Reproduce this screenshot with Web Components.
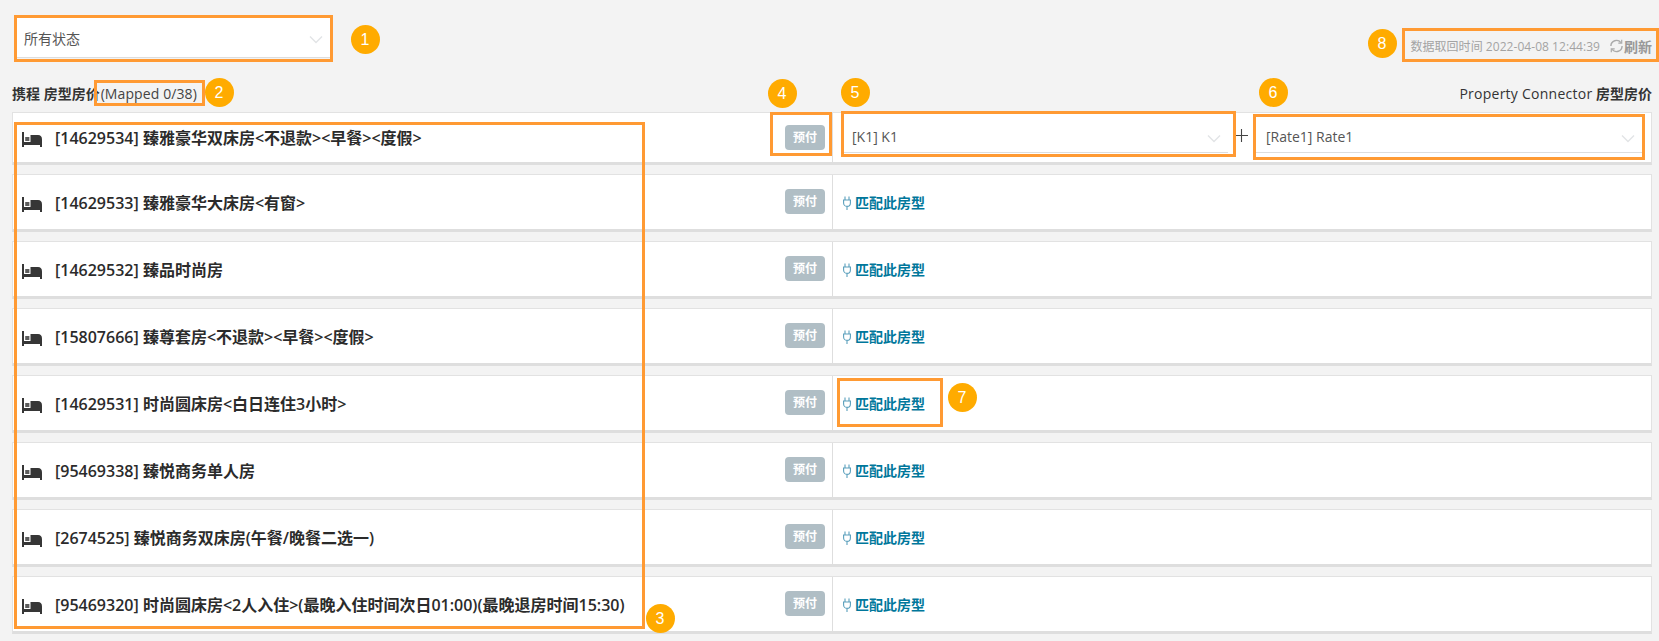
<!DOCTYPE html>
<html lang="zh">
<head>
<meta charset="utf-8">
<title>房型房价</title>
<style>
  html, body { margin: 0; padding: 0; background: #f3f3f3; }
  body {
    position: relative;
    height: 641px;
    overflow: hidden;
    font-family: "Open Sans", "Noto Sans CJK SC", sans-serif;
    color: #333;
  }
</style>
</head>
<body>
<map-page>
  <select-box slot="status" style="width:316px;height:40px;color:#555" pad="10">所有状态</select-box>
  <refresh-info slot="refresh" time="数据取回时间 2022-04-08 12:44:39">刷新</refresh-info>
  <span slot="left">携程 房型房价<span style="font-weight:400;margin-left:1px;letter-spacing:.1px;color:#444">(Mapped 0/38)</span></span>
  <span slot="right"><span style="font-weight:500;letter-spacing:.25px">Property Connector</span> 房型房价</span>

  <room-row first>[14629534] 臻雅豪华双床房&lt;不退款&gt;&lt;早餐&gt;&lt;度假&gt;
    <mapping-pair slot="map"><span slot="a">[K1] K1</span><span slot="b">[Rate1] Rate1</span></mapping-pair>
  </room-row>
  <room-row>[14629533] 臻雅豪华大床房&lt;有窗&gt;<match-link slot="map">匹配此房型</match-link></room-row>
  <room-row>[14629532] 臻品时尚房<match-link slot="map">匹配此房型</match-link></room-row>
  <room-row>[15807666] 臻尊套房&lt;不退款&gt;&lt;早餐&gt;&lt;度假&gt;<match-link slot="map">匹配此房型</match-link></room-row>
  <room-row>[14629531] 时尚圆床房&lt;白日连住3小时&gt;<match-link slot="map">匹配此房型</match-link></room-row>
  <room-row>[95469338] 臻悦商务单人房<match-link slot="map">匹配此房型</match-link></room-row>
  <room-row>[2674525] 臻悦商务双床房(午餐/晚餐二选一)<match-link slot="map">匹配此房型</match-link></room-row>
  <room-row>[95469320] 时尚圆床房&lt;2人入住&gt;(最晚入住时间次日01:00)(最晚退房时间15:30)<match-link slot="map">匹配此房型</match-link></room-row>
</map-page>

<!-- annotations drawn over the screenshot -->
<mark-box x="14" y="15" w="319" h="47"></mark-box>
<mark-box x="94" y="80" w="111" h="26"></mark-box>
<mark-box x="14" y="122" w="631" h="507"></mark-box>
<mark-box x="770" y="112" w="62" h="44"></mark-box>
<mark-box x="841" y="111" w="395" h="46"></mark-box>
<mark-box x="1253" y="114" w="392" h="46"></mark-box>
<mark-box x="837" y="378" w="106" h="49"></mark-box>
<mark-box x="1402" y="28" w="257" h="34"></mark-box>

<num-badge x="365" y="39">1</num-badge>
<num-badge x="219" y="92">2</num-badge>
<num-badge x="660" y="618">3</num-badge>
<num-badge x="782" y="93">4</num-badge>
<num-badge x="855" y="92">5</num-badge>
<num-badge x="1273" y="92">6</num-badge>
<num-badge x="962" y="397">7</num-badge>
<num-badge x="1382" y="43">8</num-badge>

<script>
class MapPage extends HTMLElement {
  connectedCallback() {
    this.attachShadow({mode: 'open'}).innerHTML = `
      <style>
        :host { display: block; padding: 18px 7px 0 12px; box-sizing: border-box; }
        .top { display: flex; justify-content: space-between; height: 40px; padding-left: 2px; }
        .heading {
          display: flex; justify-content: space-between; align-items: center;
          height: 26px; margin: 22px 0 6px; font-size: 14px; font-weight: 600; color: #333;
        }
        .rows { display: flex; flex-direction: column; gap: 9px; }
      </style>
      <div class="top"><slot name="status"></slot><slot name="refresh"></slot></div>
      <div class="heading"><slot name="left"></slot><slot name="right"></slot></div>
      <div class="rows"><slot></slot></div>
    `;
  }
}

class SelectBox extends HTMLElement {
  connectedCallback() {
    let pad = this.getAttribute('pad') || 8;
    this.attachShadow({mode: 'open'}).innerHTML = `
      <style>
        :host {
          display: flex; align-items: center; justify-content: space-between; box-sizing: border-box;
          background: #fff; border-bottom: 1px solid #ddd; font-size: 14px; color: #444;
          padding: 0 7px 0 ${pad}px;
        }
        svg { display: block; margin-top: 4px; }
      </style>
      <span><slot></slot></span>
      <svg width="14" height="9" viewBox="0 0 14 9"><path d="M1 1.5 7 7.5 13 1.5" fill="none" stroke="#e2e4e6" stroke-width="1.4"/></svg>
    `;
  }
}

class RefreshInfo extends HTMLElement {
  connectedCallback() {
    this.attachShadow({mode: 'open'}).innerHTML = `
      <style>
        :host { display: flex; align-items: center; margin-top: 16px; height: 24px; color: #a3a3a3; font-size: 12px; }
        .time { letter-spacing: .05px; }
        .btn { display: flex; align-items: center; margin-left: 9px; font-size: 14px; font-weight: 700; color: #999; }
        svg { display: block; }
      </style>
      <span class="time">${this.getAttribute('time')}</span>
      <span class="btn">
        <svg width="15" height="14" viewBox="0 0 14 14" fill="none" stroke="#aaa" stroke-width="1.4">
          <path d="M1.4 7A5.6 5.6 0 0 1 11.4 3.6"/><path d="M12.6 7A5.6 5.6 0 0 1 2.6 10.4"/>
          <path d="M12.2 .8V4.2H8.8" stroke-width="1.2"/><path d="M1.8 13.2V9.8H5.2" stroke-width="1.2"/>
        </svg><slot></slot>
      </span>
    `;
  }
}

class RoomRow extends HTMLElement {
  connectedCallback() {
    this.attachShadow({mode: 'open'}).innerHTML = `
      <style>
        :host {
          display: grid; grid-template-columns: 819px 1fr; box-sizing: border-box;
          height: 58px; background: #fff;
          border: 1px solid #e2e2e2; border-bottom: 3px solid #dedede;
        }
        :host([first]) { height: 53px; }
        .left { display: flex; align-items: center; padding: 0 7px 0 9px; }
        .bed { display: block; flex: none; margin: 4px 13px 0 0; }
        .name { flex: 1; padding-bottom: 1px; font-size: 16px; font-weight: 600; color: #2b2b2b; white-space: nowrap; }
        .rate {
          flex: none; width: 40px; height: 25px; line-height: 25px; border-radius: 4px; margin-bottom: 1px;
          background: #b0bec5; color: #fff; text-align: center; font-size: 12px; font-weight: 700;
        }
        .map { display: flex; align-items: center; border-left: 1px solid #dedede; min-width: 0; }
      </style>
      <div class="left">
        <svg class="bed" width="20" height="15" viewBox="0 0 20 15" fill="#363636">
          <path d="M0 0h2v10h18v5h-2v-2H2v2H0z"/>
          <path d="M8.5 3H16q4 0 4 4.5V10H8.5z"/>
          <rect x="3.2" y="5" width="4.2" height="4" fill="#5c5c5c"/>
        </svg>
        <span class="name"><slot></slot></span>
        <span class="rate">预付</span>
      </div>
      <div class="map"><slot name="map"></slot></div>
    `;
  }
}

class MappingPair extends HTMLElement {
  connectedCallback() {
    this.attachShadow({mode: 'open'}).innerHTML = `
      <style>
        :host { display: flex; align-items: flex-start; flex: 1; height: 100%; padding: 7px 9px 0 11px; box-sizing: border-box; }
        select-box { flex: 1; height: 33px; padding-top: 1px; font-size: 14px; color: #555; }
        .plus { flex: none; width: 27px; height: 30px; display: flex; align-items: center; justify-content: center; }
        .plus svg { display: block; }
      </style>
      <select-box pad="8"><slot name="a"></slot></select-box>
      <span class="plus"><svg width="13" height="13" viewBox="0 0 13 13"><path d="M6.5 0v13M0 6.5h13" stroke="#444" stroke-width="1.1"/></svg></span>
      <select-box pad="11"><slot name="b"></slot></select-box>
    `;
  }
}

class MatchLink extends HTMLElement {
  connectedCallback() {
    this.attachShadow({mode: 'open'}).innerHTML = `
      <style>
        :host {
          display: inline-flex; align-items: center; margin-left: 9px;
          font-size: 14px; font-weight: 700; color: #00779b;
        }
        svg { display: block; margin: 1px 3px 0 0; }
      </style>
      <svg width="10" height="14" viewBox="0 0 10 14" fill="none" stroke="#5a9fbc" stroke-width="1.1">
        <path d="M3 .5v3.5M7 .5v3.5M1 4h8M1.6 4v3a3.4 3.4 0 0 0 6.8 0V4M5 10.4V14"/>
      </svg><slot></slot>
    `;
  }
}

class MarkBox extends HTMLElement {
  connectedCallback() {
    let root = this.attachShadow({mode: 'open'});
    root.innerHTML = `
      <style>
        :host { display: block; position: absolute; box-sizing: border-box; border: 3px solid #ff9a33; pointer-events: none; }
      </style>
    `;
    this.style.left = this.getAttribute('x') + 'px';
    this.style.top = this.getAttribute('y') + 'px';
    this.style.width = this.getAttribute('w') + 'px';
    this.style.height = this.getAttribute('h') + 'px';
  }
}

class NumBadge extends HTMLElement {
  connectedCallback() {
    this.attachShadow({mode: 'open'}).innerHTML = `
      <style>
        :host {
          display: block; position: absolute; width: 29px; height: 29px; margin: -14.5px 0 0 -14.5px;
          border-radius: 50%; background: #ffab00; color: #fff; text-align: center;
          font: 16px/29px "Liberation Sans", sans-serif;
        }
      </style>
      <slot></slot>
    `;
    this.style.left = this.getAttribute('x') + 'px';
    this.style.top = this.getAttribute('y') + 'px';
  }
}

customElements.define('map-page', MapPage);
customElements.define('select-box', SelectBox);
customElements.define('refresh-info', RefreshInfo);
customElements.define('room-row', RoomRow);
customElements.define('mapping-pair', MappingPair);
customElements.define('match-link', MatchLink);
customElements.define('mark-box', MarkBox);
customElements.define('num-badge', NumBadge);
</script>
</body>
</html>
